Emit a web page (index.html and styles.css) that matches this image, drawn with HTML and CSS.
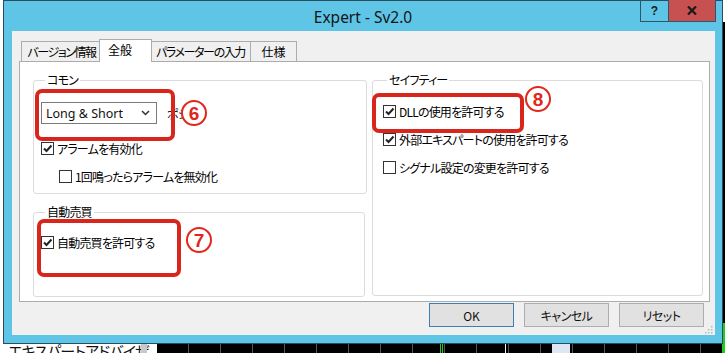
FILE: index.html
```html
<!DOCTYPE html>
<html lang="ja">
<head>
<meta charset="utf-8">
<title>Expert - Sv2.0</title>
<link rel="stylesheet" href="styles.css">
</head>
<body>
<div class="desktop">
  <div class="bg-list">エキスパートアドバイザ</div>
  <div class="bg-bar"></div>
  <div class="bg-chart">
    <div class="chart-grid"></div>
    <div class="chart-green g1"></div>
    <div class="chart-green g2"></div>
    <div class="chart-white w1"></div>
    <div class="chart-white w2"></div>
  </div>

  <div class="window">
    <div class="titlebar">
      <div class="title">Expert - Sv2.0</div>
      <div class="caption-btns">
        <div class="cbtn help">?</div>
        <div class="cbtn close">
          <svg width="10" height="9" viewBox="0 0 10 9"><path d="M1 0.5 L9 8.5 M9 0.5 L1 8.5" stroke="#1a1a1a" stroke-width="2.2" fill="none"/></svg>
        </div>
      </div>
    </div>

    <div class="client">
      <div class="tabs">
        <div class="tab t1">バージョン情報</div>
        <div class="tab t2 active">全般</div>
        <div class="tab t3">パラメーターの入力</div>
        <div class="tab t4">仕様</div>
      </div>

      <div class="panel">
        <div class="col-left">
          <fieldset class="group g-common">
            <legend>コモン</legend>
            <div class="select-row">
              <div class="select mark mark6">
                <span class="select-text">Long &amp; Short</span>
                <svg width="9" height="6" viewBox="0 0 9 6"><path d="M1 1 L4.5 4.5 L8 1" stroke="#333" stroke-width="1.5" fill="none"/></svg>
              </div>
              <span class="after-select">ポジ</span>
              <span class="num n6">6</span>
            </div>
            <div class="row first">
              <span class="cb checked"><svg width="11" height="11" viewBox="0 0 11 11"><path d="M2 5.5 L4.5 8 L9.5 2.5" stroke="#222" stroke-width="2" fill="none"/></svg></span>
              <span>アラームを有効化</span>
            </div>
            <div class="row indent">
              <span class="cb"></span>
              <span>1回鳴ったらアラームを無効化</span>
            </div>
          </fieldset>

          <fieldset class="group g-auto">
            <legend>自動売買</legend>
            <div class="row first-auto mark mark7">
              <span class="cb checked"><svg width="11" height="11" viewBox="0 0 11 11"><path d="M2 5.5 L4.5 8 L9.5 2.5" stroke="#222" stroke-width="2" fill="none"/></svg></span>
              <span>自動売買を許可する</span>
              <span class="num n7">7</span>
            </div>
          </fieldset>
        </div>

        <fieldset class="group g-safety">
          <legend>セイフティー</legend>
          <div class="row first-safe mark mark8">
            <span class="cb checked"><svg width="11" height="11" viewBox="0 0 11 11"><path d="M2 5.5 L4.5 8 L9.5 2.5" stroke="#222" stroke-width="2" fill="none"/></svg></span>
            <span>DLLの使用を許可する</span>
            <span class="num n8">8</span>
          </div>
          <div class="row">
            <span class="cb checked"><svg width="11" height="11" viewBox="0 0 11 11"><path d="M2 5.5 L4.5 8 L9.5 2.5" stroke="#222" stroke-width="2" fill="none"/></svg></span>
            <span>外部エキスパートの使用を許可する</span>
          </div>
          <div class="row">
            <span class="cb"></span>
            <span>シグナル設定の変更を許可する</span>
          </div>
        </fieldset>
      </div>

      <div class="buttons">
        <div class="btn default">OK</div>
        <div class="btn">キャンセル</div>
        <div class="btn">リセット</div>
      </div>

      <svg class="grip" width="9" height="9" viewBox="0 0 9 9">
        <rect x="7" y="1" width="1.5" height="1.5" fill="#b8b8b8"/>
        <rect x="4" y="4" width="1.5" height="1.5" fill="#b8b8b8"/>
        <rect x="7" y="4" width="1.5" height="1.5" fill="#b8b8b8"/>
        <rect x="1" y="7" width="1.5" height="1.5" fill="#b8b8b8"/>
        <rect x="4" y="7" width="1.5" height="1.5" fill="#b8b8b8"/>
        <rect x="7" y="7" width="1.5" height="1.5" fill="#b8b8b8"/>
      </svg>
    </div>
  </div>
</div>
</body>
</html>
```

FILE: styles.css
```css
* { box-sizing: border-box; }
html, body { margin: 0; padding: 0; }
body {
  width: 725px;
  height: 353px;
  overflow: hidden;
  background: #fff;
  font-family: "Noto Sans CJK JP", sans-serif;
  font-size: 12px;
  letter-spacing: -0.8px;
  color: #000;
  font-feature-settings: "palt" 1;
}

.desktop {
  position: relative;
  width: 725px;
  height: 353px;
  overflow: hidden;
  background: #fff;
}

/* background behind the dialog */
.bg-list {
  position: absolute;
  left: 8px;
  top: 341px;
  font-size: 15px;
  line-height: 20px;
  color: #111;
  white-space: nowrap;
}
.bg-bar {
  position: absolute;
  left: 141px;
  top: 343px;
  width: 6px;
  height: 10px;
  background: #c8c8c8;
}
.bg-chart {
  position: absolute;
  left: 157px;
  top: 22px;
  right: 0;
  bottom: 0;
  background: #000;
}
.chart-grid {
  position: absolute;
  inset: 0;
  background: repeating-linear-gradient(90deg, transparent 0 31px, #555 31px 32px);
}
.chart-green { position: absolute; background: #1ecf1e; }
.chart-green.g1 { left: 283px; bottom: 0; width: 4px; height: 10px;
  background: repeating-linear-gradient(90deg, #1ecf1e 0 1px, #000 1px 2px); }
.chart-green.g2 { left: 565px; bottom: 0; width: 3px; height: 30px; }
.chart-white { position: absolute; background: #f2f2f2; bottom: 0; height: 10px; }
.chart-white.w1 { left: 348px; width: 1px; }
.chart-white.w2 { left: 395px; width: 18px; background: #dde6f2; }

/* dialog window */
.window {
  position: absolute;
  left: 3px;
  top: 0;
  width: 720px;
  height: 344px;
  border: 1px solid #2b4d5e;
  background: #5ec5e7;
  display: flex;
  flex-direction: column;
}
.titlebar {
  flex: none;
  height: 30px;
  position: relative;
  display: flex;
  align-items: center;
  justify-content: center;
}
.title {
  font-family: "Noto Sans", sans-serif;
  font-size: 15.5px;
  letter-spacing: 0;
  color: #141414;
  padding-top: 1px;
}
.caption-btns {
  position: absolute;
  top: -1px;
  right: 6px;
  height: 22px;
  display: flex;
  border: 1px solid #2e5669;
  border-top: none;
}
.cbtn {
  height: 100%;
  display: flex;
  align-items: center;
  justify-content: center;
}
.cbtn.help {
  width: 28px;
  border-right: 1px solid #2e5669;
  font-family: "Liberation Sans", sans-serif;
  font-weight: bold;
  font-size: 12px;
  letter-spacing: 0;
  color: #1a1a1a;
}
.cbtn.close {
  width: 46px;
  background: #c75050;
}

.client {
  flex: 1;
  margin: 0 7px 8px 8px;
  background: #f0f0f0;
  padding-top: 8px;
  display: flex;
  flex-direction: column;
  position: relative;
}

/* tabs */
.tabs {
  display: flex;
  align-items: flex-end;
  height: 22px;
  margin-left: 9px;
  position: relative;
  z-index: 1;
}
.tab {
  height: 20px;
  border-top: 1px solid #acacac;
  border-left: 1px solid #acacac;
  background: #f0f0f0;
  display: flex;
  align-items: center;
  justify-content: center;
  line-height: 16px;
  white-space: nowrap;
  padding-top: 1px;
  letter-spacing: -1.4px;
}
.tab.t1 { width: 80px; }
.tab.t2 { width: 49px; }
.tab.t3 { width: 100px; }
.tab.t4 { width: 47px; border-right: 1px solid #acacac; letter-spacing: 0; }
.tab.active {
  width: 53px;
  height: 23px;
  margin: 0 -2px -1px -2px;
  background: #fff;
  border: 1px solid #acacac;
  border-bottom: none;
  justify-content: flex-start;
  padding: 0 0 2px 8px;
  letter-spacing: 0;
  position: relative;
  z-index: 2;
}

/* panel */
.panel {
  height: 241px;
  margin: 0 5px 0 7px;
  background: #fff;
  border: 1px solid #acacac;
  padding: 10px 5px 4px 13px;
  display: grid;
  grid-template-columns: 334px 331px;
  column-gap: 5px;
}
.col-left {
  display: flex;
  flex-direction: column;
  gap: 10px;
}
.group {
  margin: 0;
  min-width: 0;
  border: 1px solid #dcdcdc;
  border-radius: 3px;
  padding: 0 7px;
}
.group legend {
  margin-left: 4px;
  padding: 0 2px;
  line-height: 16px;
  font-size: 12px;
}
.g-common { height: 122px; }
.g-auto { height: 93px; margin-right: 2px; }
.g-safety { height: 224px; padding-left: 10px; }

.select-row {
  position: relative;
  display: flex;
  align-items: center;
  margin-top: 14px;
  height: 22px;
}
.select {
  width: 116px;
  height: 22px;
  border: 1px solid #7a7a7a;
  background: #fff;
  display: flex;
  align-items: center;
  justify-content: space-between;
  padding: 0 6px 0 4px;
  font-family: "Noto Sans", sans-serif;
  font-size: 12.5px;
  letter-spacing: 0;
  color: #111;
}
.after-select {
  margin-left: 10px;
  color: #222;
}

.row {
  display: flex;
  align-items: center;
  gap: 2px;
  height: 16px;
  margin-top: 12px;
  white-space: nowrap;
}
.row.first { margin-top: 16px; }
.row.indent { padding-left: 18px; }
.row.first-auto { margin-top: 14px; }
.row.first-safe { margin-top: 15px; }

.cb {
  flex: none;
  width: 13px;
  height: 13px;
  border: 1px solid #333;
  background: #fff;
  display: flex;
  align-items: center;
  justify-content: center;
  margin-right: 1px;
}

/* red annotations */
.mark { position: relative; }
.mark::before {
  content: "";
  position: absolute;
  border: 4px solid #d8261c;
  border-radius: 7px;
  pointer-events: none;
}
.mark6::before { left: -7px; top: -14px; width: 132px; height: 44px; }
.mark7::before { left: -4px; top: -15px; width: 136px; height: 50px; }
.mark8::before { left: -11px; top: -10px; width: 144px; height: 32px; }

.num {
  position: absolute;
  width: 26px;
  height: 26px;
  border: 2px solid #e2261b;
  border-radius: 50%;
  background: #fff;
  color: #e2261b;
  font-family: "Liberation Sans", sans-serif;
  font-weight: bold;
  font-size: 19px;
  letter-spacing: 0;
  line-height: 1;
  display: flex;
  align-items: center;
  justify-content: center;
}
.n6 { left: 140px; top: -2px; }
.n7 { left: 145px; top: -7px; }
.n8 { left: 142px; top: -17px; }

/* buttons */
.buttons {
  display: flex;
  justify-content: flex-end;
  gap: 10px;
  margin-top: 1px;
  padding-right: 11px;
}
.btn {
  width: 85px;
  height: 24px;
  background: #e1e1e1;
  border: 1px solid #adadad;
  display: flex;
  align-items: center;
  justify-content: center;
  color: #111;
  letter-spacing: -0.5px;
}
.btn.default { border-color: #3c7fb1; letter-spacing: 0; }

.grip {
  position: absolute;
  right: 2px;
  bottom: 1px;
}
```
